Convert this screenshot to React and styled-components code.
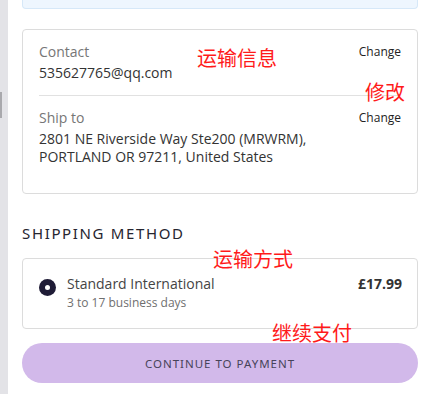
import React from 'react';
import styled, { createGlobalStyle } from 'styled-components';

const GlobalStyle = createGlobalStyle`
  html, body {
    margin: 0;
    padding: 0;
    background: #ffffff;
  }
  body {
    font-family: "Open Sans", "Liberation Sans", sans-serif;
    color: #333333;
  }
`;

const Page = styled.div`
  position: relative;
  display: flex;
  width: 435px;
  height: 394px;
  overflow: hidden;
  background: #ffffff;
`;

const SideRail = styled.div`
  position: relative;
  flex: 0 0 8px;
  background: #e3e3e7;
`;

const RailThumb = styled.div`
  width: 2px;
  height: 26px;
  margin-top: 92px;
  background: #a9a9ad;
`;

const Main = styled.main`
  flex: 1;
  display: flex;
  flex-direction: column;
  padding: 0 17px 0 14px;
`;

const Notice = styled.div`
  height: 8px;
  background: #eef6fe;
  border: 1px solid #d6e8f8;
  border-top: none;
  border-radius: 0 0 4px 4px;
`;

const Card = styled.section`
  border: 1px solid #dcdcdc;
  border-radius: 4px;
  margin-top: ${(p) => p.$top}px;
  padding: ${(p) => p.$padding};
`;

const InfoRow = styled.div`
  display: flex;
  justify-content: space-between;
  align-items: flex-start;
  padding: ${(p) => p.$padding};
  border-bottom: ${(p) => (p.$divider ? '1px solid #e1e1e1' : 'none')};
`;

const InfoText = styled.div`
  display: flex;
  flex-direction: column;
`;

const Label = styled.span`
  font-size: 14px;
  line-height: 20px;
  color: #767676;
  margin-bottom: 2px;
`;

const Value = styled.span`
  font-size: 14px;
  line-height: 18px;
  color: #333333;
`;

const ChangeLink = styled.a`
  font-size: 12px;
  line-height: 20px;
  color: #222222;
  text-decoration: none;
`;

const SectionTitle = styled.h2`
  margin: 29px 0 0;
  font-family: "Noto Sans", "Open Sans", sans-serif;
  font-weight: 400;
  font-size: 15px;
  line-height: 20px;
  letter-spacing: 1.65px;
  color: #26252f;
`;

const MethodRow = styled.label`
  display: flex;
  align-items: flex-start;
`;

const Radio = styled.span`
  flex: 0 0 17px;
  width: 17px;
  height: 17px;
  margin: 5px 11px 0 0;
  border-radius: 50%;
  background: #1f1c36;
  display: flex;
  align-items: center;
  justify-content: center;
  &::after {
    content: '';
    width: 5px;
    height: 5px;
    border-radius: 50%;
    background: #ffffff;
  }
`;

const MethodText = styled.div`
  flex: 1;
  display: flex;
  flex-direction: column;
`;

const MethodName = styled.span`
  font-size: 14px;
  line-height: 20px;
  color: #444444;
`;

const MethodNote = styled.span`
  font-size: 12px;
  line-height: 18px;
  color: #6f6f6f;
`;

const Price = styled.span`
  font-size: 14px;
  line-height: 20px;
  font-weight: 700;
  color: #333333;
`;

const PayButton = styled.button`
  margin-top: 14px;
  height: 40px;
  border: none;
  border-radius: 20px;
  background: #d2b9ea;
  font-family: "Noto Sans", "Open Sans", sans-serif;
  font-size: 11.5px;
  letter-spacing: 1px;
  color: #47445a;
  cursor: pointer;
`;

const Note = styled.span`
  position: absolute;
  left: ${(p) => p.$x}px;
  top: ${(p) => p.$y}px;
  font-family: "Noto Sans CJK SC", sans-serif;
  font-size: 20px;
  line-height: 22px;
  color: #ff1a1a;
  pointer-events: none;
`;

const notes = [
  { text: '运输信息', x: 197, y: 47 },
  { text: '修改', x: 365, y: 81 },
  { text: '运输方式', x: 213, y: 248 },
  { text: '继续支付', x: 272, y: 322 },
];

export default function App() {
  return (
    <>
      <GlobalStyle />
      <Page>
        <SideRail>
          <RailThumb />
        </SideRail>
        <Main>
          <Notice />
          <Card $top={20} $padding="0 16px 0 16px">
            <InfoRow $padding="12px 0 13px" $divider>
              <InfoText>
                <Label>Contact</Label>
                <Value>535627765@qq.com</Value>
              </InfoText>
              <ChangeLink href="#">Change</ChangeLink>
            </InfoRow>
            <InfoRow $padding="12px 0 27px">
              <InfoText>
                <Label>Ship to</Label>
                <Value>2801 NE Riverside Way Ste200 (MRWRM),</Value>
                <Value>PORTLAND OR 97211, United States</Value>
              </InfoText>
              <ChangeLink href="#">Change</ChangeLink>
            </InfoRow>
          </Card>
          <SectionTitle>SHIPPING METHOD</SectionTitle>
          <Card $top={15} $padding="15px 15px 16px 16px">
            <MethodRow>
              <Radio />
              <MethodText>
                <MethodName>Standard International</MethodName>
                <MethodNote>3 to 17 business days</MethodNote>
              </MethodText>
              <Price>£17.99</Price>
            </MethodRow>
          </Card>
          <PayButton type="button">CONTINUE TO PAYMENT</PayButton>
        </Main>
        {notes.map((n) => (
          <Note key={n.text} $x={n.x} $y={n.y}>
            {n.text}
          </Note>
        ))}
      </Page>
    </>
  );
}
